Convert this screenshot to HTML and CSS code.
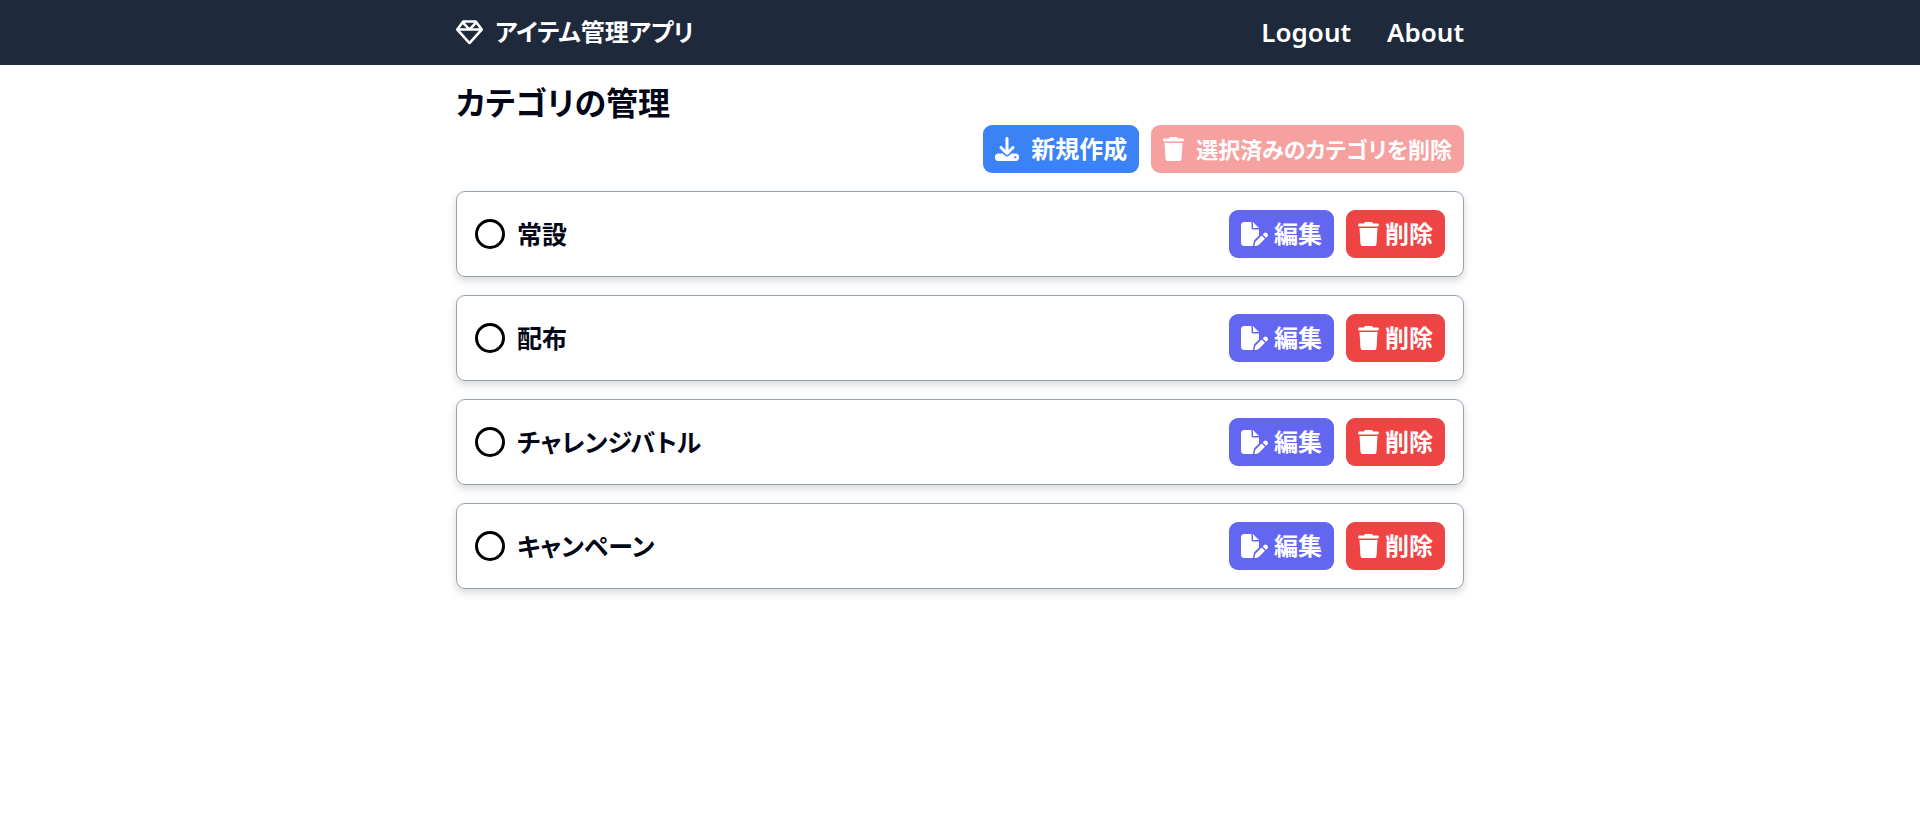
FILE: index.html
```html
<!DOCTYPE html>
<html lang="ja">
<head>
<meta charset="utf-8">
<meta name="viewport" content="width=device-width, initial-scale=1">
<title>アイテム管理アプリ</title>
<link rel="stylesheet" href="styles.css">
</head>
<body>
<svg class="sprite" aria-hidden="true">
  <symbol id="gem" viewBox="0 0 512 512"><path d="M168.5 72L256 165l87.5-93h-175zM383.9 99.1L311.5 176h129L383.9 99.1zm50 124.9H256 78.1L256 420.3 433.9 224zM71.5 176h129L128.1 99.1 71.5 176zm434.3 40.1l-232 256c-4.5 5-11 7.9-17.8 7.9s-13.2-2.9-17.8-7.9l-232-256c-7.7-8.5-8.3-21.2-1.5-30.4l112-152c4.5-6.1 11.7-9.8 19.3-9.8H376c7.6 0 14.8 3.6 19.3 9.8l112 152c6.8 9.2 6.1 21.9-1.5 30.4z"/></symbol>
  <symbol id="download" viewBox="0 0 512 512"><path d="M288 32c0-17.7-14.3-32-32-32s-32 14.3-32 32V274.7l-73.4-73.4c-12.5-12.5-32.8-12.5-45.3 0s-12.5 32.8 0 45.3l128 128c12.5 12.5 32.8 12.5 45.3 0l128-128c12.5-12.5 12.5-32.8 0-45.3s-32.8-12.5-45.3 0L288 274.7V32zM64 352c-35.3 0-64 28.7-64 64v32c0 35.3 28.7 64 64 64H448c35.3 0 64-28.7 64-64V416c0-35.3-28.7-64-64-64H346.5l-45.3 45.3c-25 25-65.5 25-90.5 0L165.5 352H64zm368 56a24 24 0 1 1 0 48 24 24 0 1 1 0-48z"/></symbol>
  <symbol id="trash" viewBox="0 0 448 512"><path d="M135.2 17.7L128 32H32C14.3 32 0 46.3 0 64S14.3 96 32 96H416c17.7 0 32-14.3 32-32s-14.3-32-32-32H320l-7.2-14.3C307.4 6.8 296.3 0 284.2 0H163.8c-12.1 0-23.2 6.8-28.6 17.7zM416 128H32L53.2 467c1.6 25.3 22.6 45 47.9 45H346.9c25.3 0 46.3-19.7 47.9-45L416 128z"/></symbol>
  <symbol id="file-pen" viewBox="0 0 576 512"><path d="M0 64C0 28.7 28.7 0 64 0H224V128c0 17.7 14.3 32 32 32H384V285.7l-86.8 86.8c-10.3 10.3-17.5 23.1-21 37.2l-18.7 74.9c-2.3 9.2-1.8 18.8 1.3 27.5H64c-35.3 0-64-28.7-64-64V64zm384 64H256V0L384 128zM549.8 235.7l14.4 14.4c15.6 15.6 15.6 40.9 0 56.6l-29.4 29.4-71-71 29.4-29.4c15.6-15.6 40.9-15.6 56.6 0zM311.9 417L441.1 287.8l71 71L382.9 487.9c-4.1 4.1-9.2 7-14.9 8.4l-60.1 15c-5.5 1.4-11.2-.2-15.2-4.2s-5.6-9.7-4.2-15.2l15-60.1c1.4-5.6 4.3-10.8 8.4-14.9z"/></symbol>
</svg>
<header class="site-header">
  <nav class="container nav">
    <a class="brand" href="#"><svg class="icon icon-gem" aria-hidden="true"><use href="#gem"/></svg>アイテム管理アプリ</a>
    <div class="nav-links">
      <a href="#">Logout</a>
      <a href="#">About</a>
    </div>
  </nav>
</header>
<main class="container main">
  <h1 class="title">カテゴリの管理</h1>
  <div class="toolbar">
    <button class="btn btn-wide btn-new" type="button"><svg class="icon" aria-hidden="true"><use href="#download"/></svg>新規作成</button>
    <button class="btn btn-wide btn-delete btn-bulk" type="button" disabled><svg class="icon icon-trash" aria-hidden="true"><use href="#trash"/></svg>選択済みのカテゴリを削除</button>
  </div>
  <ul class="list">
    <li class="card">
      <label class="choice"><input class="check" type="checkbox">常設</label>
      <button class="btn btn-edit" type="button"><svg class="icon icon-edit" aria-hidden="true"><use href="#file-pen"/></svg>編集</button>
      <button class="btn btn-delete" type="button"><svg class="icon icon-trash" aria-hidden="true"><use href="#trash"/></svg>削除</button>
    </li>
    <li class="card">
      <label class="choice"><input class="check" type="checkbox">配布</label>
      <button class="btn btn-edit" type="button"><svg class="icon icon-edit" aria-hidden="true"><use href="#file-pen"/></svg>編集</button>
      <button class="btn btn-delete" type="button"><svg class="icon icon-trash" aria-hidden="true"><use href="#trash"/></svg>削除</button>
    </li>
    <li class="card">
      <label class="choice"><input class="check" type="checkbox">チャレンジバトル</label>
      <button class="btn btn-edit" type="button"><svg class="icon icon-edit" aria-hidden="true"><use href="#file-pen"/></svg>編集</button>
      <button class="btn btn-delete" type="button"><svg class="icon icon-trash" aria-hidden="true"><use href="#trash"/></svg>削除</button>
    </li>
    <li class="card">
      <label class="choice"><input class="check" type="checkbox">キャンペーン</label>
      <button class="btn btn-edit" type="button"><svg class="icon icon-edit" aria-hidden="true"><use href="#file-pen"/></svg>編集</button>
      <button class="btn btn-delete" type="button"><svg class="icon icon-trash" aria-hidden="true"><use href="#trash"/></svg>削除</button>
    </li>
  </ul>
</main>
</body>
</html>
```
FILE: styles.css
```css
* {
  box-sizing: border-box;
}

body {
  margin: 0;
  background: #fff;
  color: #020617;
  font-family: "Open Sans", "Noto Sans CJK JP", sans-serif;
  font-weight: 600;
  font-feature-settings: "palt";
}

.sprite {
  display: none;
}

.container {
  width: 100%;
  max-width: 1008px;
  margin: 0 auto;
}

.icon {
  flex: none;
  width: 24px;
  height: 24px;
  fill: currentColor;
}

.icon-gem {
  width: 27px;
  height: 27px;
}

.icon-trash {
  width: 21px;
}

.icon-edit {
  width: 27px;
}

.site-header {
  background: #1e293b;
  color: #fff;
}

.nav {
  display: flex;
  justify-content: space-between;
  align-items: center;
  padding: 14px 0 15px;
  font-size: 24px;
  line-height: 36px;
}

.nav a {
  color: inherit;
  text-decoration: none;
}

.brand {
  display: flex;
  align-items: center;
  gap: 12px;
}

.nav-links {
  display: flex;
  gap: 36px;
  padding-top: 1px;
  font-family: "Noto Sans", sans-serif;
  font-size: 26px;
  line-height: 35px;
}

.main {
  padding: 15px 0 18px;
}

.title {
  margin: 0;
  font-size: 32px;
  font-weight: 600;
  line-height: 45px;
}

.toolbar {
  display: flex;
  justify-content: flex-end;
  gap: 12px;
  margin-bottom: 18px;
}

.btn {
  display: flex;
  align-items: center;
  gap: 6px;
  padding: 6px 12px;
  border: 0;
  border-radius: 9px;
  color: #fff;
  font: inherit;
  font-feature-settings: inherit;
  font-size: 24px;
  line-height: 36px;
  white-space: nowrap;
  cursor: pointer;
}

.btn-wide {
  gap: 12px;
}

.btn-new {
  background: #3b82f6;
}

.btn-edit {
  background: #6366f1;
}

.btn-delete {
  background: #ef4444;
}

.btn-bulk {
  font-size: 22px;
}

.btn:disabled {
  opacity: 0.5;
  cursor: default;
}

.list {
  display: grid;
  gap: 18px;
  margin: 0;
  padding: 0;
  list-style: none;
}

.card {
  display: flex;
  align-items: center;
  gap: 12px;
  padding: 18px;
  border: 1px solid #94a3b8;
  border-radius: 9px;
  box-shadow: 0 4px 8px rgb(0 0 0 / 15%);
}

.choice {
  display: flex;
  flex: 1;
  align-items: center;
  gap: 12px;
  font-size: 25px;
  line-height: 36px;
}

.check {
  appearance: none;
  flex: none;
  width: 30px;
  height: 30px;
  margin: 0;
  border: 3px solid #000;
  border-radius: 50%;
}

.check:checked {
  background: #000;
}
```
